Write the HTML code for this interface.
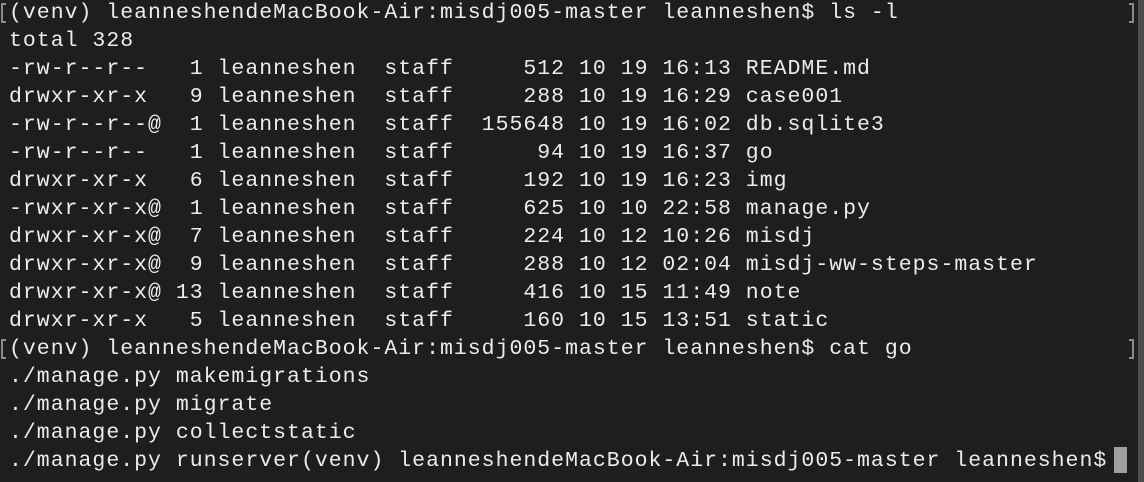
<!DOCTYPE html>
<html><head><meta charset="utf-8"><style>
html,body{margin:0;padding:0;}
body{width:1144px;height:482px;background:#1e1e1e;overflow:hidden;position:relative;}
pre{margin:0;position:absolute;left:9px;top:-1px;font-family:"Liberation Mono",monospace;font-size:21.5px;letter-spacing:1.0px;line-height:28px;color:#ececec;white-space:pre;}
.sb{position:absolute;left:1138px;top:0;width:6px;height:482px;background:#4a4c4e;}
.bl{position:absolute;left:1px;height:20px;border:2px solid #8a8a8a;border-right:none;box-sizing:border-box;width:5px;}
.br{position:absolute;left:1129px;width:5px;height:20px;border:2px solid #8a8a8a;border-left:none;box-sizing:border-box;}
.cur{position:absolute;left:1114px;top:447px;width:13px;height:26px;background:#a0a0a0;}
</style></head><body>
<div class="sb"></div>
<div class="bl" style="top:3px"></div><div class="br" style="top:3px"></div>
<div class="bl" style="top:339px"></div><div class="br" style="top:339px"></div>
<pre>(venv) leanneshendeMacBook-Air:misdj005-master leanneshen$ ls -l
total 328
-rw-r--r--   1 leanneshen  staff     512 10 19 16:13 README.md
drwxr-xr-x   9 leanneshen  staff     288 10 19 16:29 case001
-rw-r--r--@  1 leanneshen  staff  155648 10 19 16:02 db.sqlite3
-rw-r--r--   1 leanneshen  staff      94 10 19 16:37 go
drwxr-xr-x   6 leanneshen  staff     192 10 19 16:23 img
-rwxr-xr-x@  1 leanneshen  staff     625 10 10 22:58 manage.py
drwxr-xr-x@  7 leanneshen  staff     224 10 12 10:26 misdj
drwxr-xr-x@  9 leanneshen  staff     288 10 12 02:04 misdj-ww-steps-master
drwxr-xr-x@ 13 leanneshen  staff     416 10 15 11:49 note
drwxr-xr-x   5 leanneshen  staff     160 10 15 13:51 static
(venv) leanneshendeMacBook-Air:misdj005-master leanneshen$ cat go
./manage.py makemigrations
./manage.py migrate
./manage.py collectstatic
./manage.py runserver(venv) leanneshendeMacBook-Air:misdj005-master leanneshen$</pre>
<div class="cur"></div>
</body></html>
